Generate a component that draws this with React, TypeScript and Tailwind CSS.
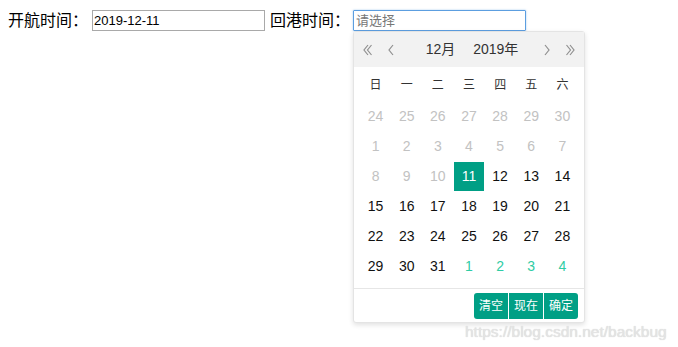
import { ReactNode } from 'react';

type Day = { n: number; kind: 'prev' | 'cur' | 'next' };

const weekdays = ['日', '一', '二', '三', '四', '五', '六'];

function buildDays(): Day[] {
    const days: Day[] = [];
    for (let n = 24; n <= 30; n++) days.push({ n, kind: 'prev' });
    for (let n = 1; n <= 10; n++) days.push({ n, kind: 'prev' });
    for (let n = 11; n <= 31; n++) days.push({ n, kind: 'cur' });
    for (let n = 1; n <= 4; n++) days.push({ n, kind: 'next' });
    return days;
}

function Chevron({ dir, double }: { dir: 'left' | 'right'; double?: boolean }) {
    const flip = dir === 'right' ? 'scale(-1,1) translate(-10,0)' : undefined;
    return (
        <svg width="10" height="12" viewBox="0 0 10 12" fill="none" stroke="#8f8f8f" strokeWidth="1.2">
            <g transform={flip}>
                {double ? (
                    <>
                        <path d="M5 1 L1 6 L5 11" />
                        <path d="M8.5 1 L4.5 6 L8.5 11" />
                    </>
                ) : (
                    <path d="M7 1 L3 6 L7 11" />
                )}
            </g>
        </svg>
    );
}

function FooterBtn({ children, className }: { children: ReactNode; className?: string }) {
    return (
        <span
            className={`flex h-[26px] w-[34px] items-center justify-center bg-[#009f85] text-[12px] text-white ${className ?? ''}`}
        >
            {children}
        </span>
    );
}

function Calendar() {
    const days = buildDays();
    return (
        <div className="absolute left-0 top-[23px] w-[232px] rounded-[3px] border border-[#e4e4e4] bg-white shadow-[0_2px_5px_rgba(0,0,0,0.12)]">
            <div className="flex h-[35px] items-center bg-[#f2f2f2] px-[9px] text-[14px] text-[#333]">
                <Chevron dir="left" double />
                <span className="ml-[13px]">
                    <Chevron dir="left" />
                </span>
                <div className="flex flex-1 justify-center gap-[18px] pl-[6px]">
                    <span>12月</span>
                    <span>2019年</span>
                </div>
                <span className="mr-[13px]">
                    <Chevron dir="right" />
                </span>
                <Chevron dir="right" double />
            </div>

            <div className="px-[6px] pb-[7px] pt-[9px]">
                <div className="grid h-[25px] grid-cols-7 items-start text-[12px] text-[#333]">
                    {weekdays.map((w) => (
                        <span key={w} className="text-center">
                            {w}
                        </span>
                    ))}
                </div>
                <div className="grid grid-cols-7 text-[14px]">
                    {days.map((d, i) => {
                        const selected = d.kind === 'cur' && d.n === 11;
                        const color =
                            d.kind === 'prev' ? 'text-[#c2c2c2]' : d.kind === 'next' ? 'text-[#2fcca4]' : 'text-[#111]';
                        return (
                            <div key={i} className="flex h-[30px] items-center justify-center">
                                <span
                                    className={`flex h-[29px] w-[30px] items-center justify-center ${
                                        selected ? 'bg-[#009f85] text-white' : color
                                    }`}
                                >
                                    {d.n}
                                </span>
                            </div>
                        );
                    })}
                </div>
            </div>

            <div className="flex h-[34px] items-center justify-end gap-[1px] border-t border-[#e6e6e6] pr-[6px]">
                <FooterBtn className="rounded-l-[3px]">清空</FooterBtn>
                <FooterBtn>现在</FooterBtn>
                <FooterBtn className="rounded-r-[3px]">确定</FooterBtn>
            </div>
        </div>
    );
}

export default function App() {
    return (
        <div
            className="relative h-[347px] w-[678px] overflow-hidden bg-white text-black"
            style={{ fontFamily: '"Liberation Sans", "Noto Sans CJK SC", sans-serif' }}
        >
            <div className="flex items-center pl-[8px] pt-[8px]">
                <span className="w-[84px] text-[16px] leading-[21px]">开航时间：</span>
                <input
                    readOnly
                    value="2019-12-11"
                    className="h-[21px] w-[173px] border border-[#a9a9a9] px-[1px] text-[13px] text-black outline-none"
                />
                <span className="ml-[5px] w-[83px] text-[16px] leading-[21px]">回港时间：</span>
                <div className="relative">
                    <input
                        readOnly
                        placeholder="请选择"
                        className="h-[21px] w-[173px] rounded-[1px] border border-[#5c9ee0] px-[2px] text-[13px] shadow-[0_0_2px_rgba(92,158,224,0.6)] outline-none placeholder:text-[#777]"
                    />
                    <Calendar />
                </div>
            </div>

            <span className="absolute left-[465px] top-[320px] text-[15.5px] text-[#e4e4e4] [text-shadow:0_0_1px_#cfcfcf]">
                https://blog.csdn.net/backbug
            </span>
        </div>
    );
}
